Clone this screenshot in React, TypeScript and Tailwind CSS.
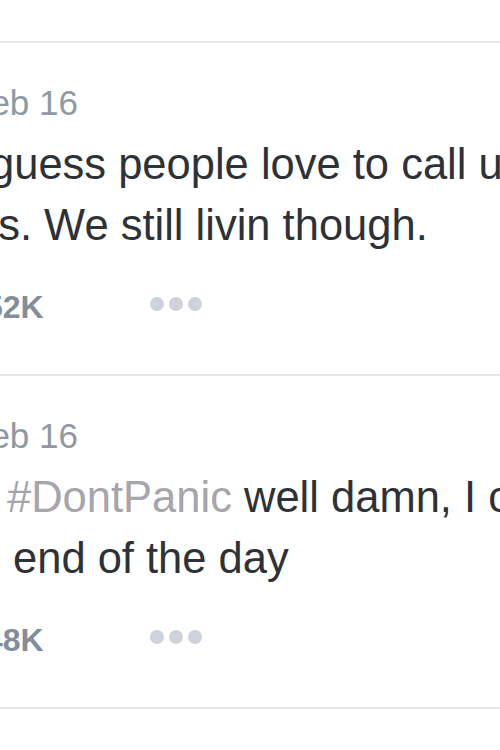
import React from "react";

type Tweet = {
  date: string;
  lines: React.ReactNode[];
  offsets: string[];
  count: string;
};

const tweets: Tweet[] = [
  {
    date: "Feb 16",
    lines: ["guess people love to call us", "us. We still livin though."],
    offsets: ["ml-[-10px]", "ml-[-26px]"],
    count: "52K",
  },
  {
    date: "Feb 16",
    lines: [
      <>
        <span className="text-[#a5a5ab]">#DontPanic</span> well damn, I can't
      </>,
      "end of the day",
    ],
    offsets: ["ml-[7px]", "ml-[13px]"],
    count: "48K",
  },
];

const TweetRow = ({ tweet }: { tweet: Tweet }) => {
  return (
    <article className="border-t-2 border-[#e4e8eb] pt-10 pb-[47px]">
      <p className="ml-[-31px] whitespace-nowrap text-[35px] leading-[40px] text-[#8e99a3]">
        {tweet.date}
      </p>
      <div className="mt-[11px] text-[43.5px] leading-[61px] text-[#2e3236]">
        {tweet.lines.map((line, i) => (
          <p key={i} className={`whitespace-nowrap ${tweet.offsets[i]}`}>
            {line}
          </p>
        ))}
      </div>
      <div className="mt-[31px] flex h-10 items-center">
        <span className="ml-[-15px] w-[165px] text-[32px] font-bold leading-[40px] text-[#838e98]">
          {tweet.count}
        </span>
        <button type="button" className="mb-[6px] flex gap-[5px]">
          <span className="h-[14px] w-[14px] rounded-full bg-[#cdd3d8]" />
          <span className="h-[14px] w-[14px] rounded-full bg-[#cdd3d8]" />
          <span className="h-[14px] w-[14px] rounded-full bg-[#cdd3d8]" />
        </button>
      </div>
    </article>
  );
};

const App = () => {
  return (
    <main
      className="h-[750px] w-full overflow-hidden bg-white pt-[41px]"
      style={{ fontFamily: '"Liberation Sans", Arial, sans-serif' }}
    >
      {tweets.map((t, i) => (
        <TweetRow key={i} tweet={t} />
      ))}
      <div className="border-t-2 border-[#e4e8eb]" />
    </main>
  );
};

export default App;
